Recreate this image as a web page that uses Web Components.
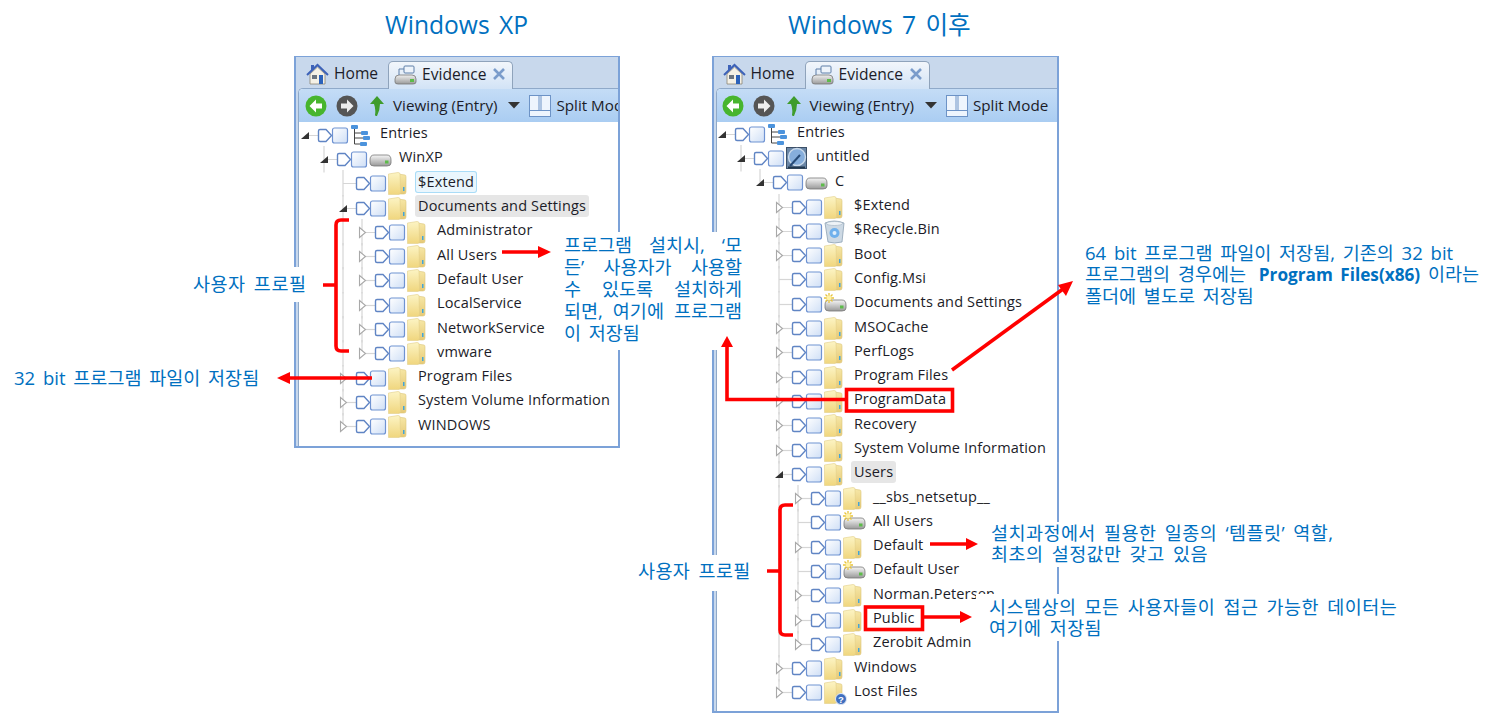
<!DOCTYPE html>
<html lang="ko">
<head>
<meta charset="utf-8">
<title>Windows 사용자 프로필</title>
<style>
  html, body { margin: 0; padding: 0; background: #fff; }
  b { font-weight: 700; font-size: 17.2px; margin-left: 5px; }
</style>
</head>
<body>
<diagram-slide>
  <note-text title-size style="left:385px;top:9px">Windows XP</note-text>
  <note-text title-size style="left:788px;top:9px">Windows 7 이후</note-text>

  <ev-window style="left:294px;top:56px;width:326px;height:392px" tree-top="1" shift="-1">
    <tree-row depth="0" exp="open" icon="tree">Entries</tree-row>
    <tree-row depth="1" exp="open" icon="drive" lines="1">WinXP</tree-row>
    <tree-row depth="2" icon="folder" lines="2" pill="blue">$Extend</tree-row>
    <tree-row depth="2" exp="open" icon="folder" lines="2" pill="gray">Documents and Settings</tree-row>
    <tree-row depth="3" exp="closed" icon="folder" lines="2 3">Administrator</tree-row>
    <tree-row depth="3" exp="closed" icon="folder" lines="2 3">All Users</tree-row>
    <tree-row depth="3" exp="closed" icon="folder" lines="2 3">Default User</tree-row>
    <tree-row depth="3" exp="closed" icon="folder" lines="2 3">LocalService</tree-row>
    <tree-row depth="3" exp="closed" icon="folder" lines="2 3">NetworkService</tree-row>
    <tree-row depth="3" exp="closed" icon="folder" lines="2 3e">vmware</tree-row>
    <tree-row depth="2" exp="closed" icon="folder" lines="2">Program Files</tree-row>
    <tree-row depth="2" exp="closed" icon="folder" lines="2">System Volume Information</tree-row>
    <tree-row depth="2" exp="closed" icon="folder" lines="2e">WINDOWS</tree-row>
  </ev-window>

  <ev-window style="left:712px;top:56px;width:347px;height:657px" tree-top="0" shift="-2" pad="-1.5">
    <tree-row depth="0" exp="open" icon="tree">Entries</tree-row>
    <tree-row depth="1" exp="open" icon="disc" lines="1">untitled</tree-row>
    <tree-row depth="2" exp="open" icon="drive" lines="2e">C</tree-row>
    <tree-row depth="3" exp="closed" icon="folder" lines="3">$Extend</tree-row>
    <tree-row depth="3" exp="closed" icon="bin" lines="3">$Recycle.Bin</tree-row>
    <tree-row depth="3" exp="closed" icon="folder" lines="3">Boot</tree-row>
    <tree-row depth="3" icon="folder" lines="3">Config.Msi</tree-row>
    <tree-row depth="3" icon="star" lines="3">Documents and Settings</tree-row>
    <tree-row depth="3" exp="closed" icon="folder" lines="3">MSOCache</tree-row>
    <tree-row depth="3" exp="closed" icon="folder" lines="3">PerfLogs</tree-row>
    <tree-row depth="3" exp="closed" icon="folder" lines="3">Program Files</tree-row>
    <tree-row depth="3" exp="closed" icon="folder" lines="3">ProgramData</tree-row>
    <tree-row depth="3" exp="closed" icon="folder" lines="3">Recovery</tree-row>
    <tree-row depth="3" exp="closed" icon="folder" lines="3">System Volume Information</tree-row>
    <tree-row depth="3" exp="open" icon="folder" lines="3" pill="gray">Users</tree-row>
    <tree-row depth="4" exp="closed" icon="folder" lines="3 4">__sbs_netsetup__</tree-row>
    <tree-row depth="4" icon="star" lines="3 4">All Users</tree-row>
    <tree-row depth="4" exp="closed" icon="folder" lines="3 4">Default</tree-row>
    <tree-row depth="4" icon="star" lines="3 4">Default User</tree-row>
    <tree-row depth="4" exp="closed" icon="folder" lines="3 4">Norman.Petersen</tree-row>
    <tree-row depth="4" exp="closed" icon="folder" lines="3 4">Public</tree-row>
    <tree-row depth="4" exp="closed" icon="folder" lines="3 4e">Zerobit Admin</tree-row>
    <tree-row depth="3" exp="closed" icon="folder" lines="3">Windows</tree-row>
    <tree-row depth="3" exp="closed" icon="lost" lines="3e">Lost Files</tree-row>
  </ev-window>

  <note-text patch style="left:186px;top:267px;width:119px;padding:5px 7px 6px 7px;letter-spacing:.5px">사용자 프로필</note-text>
  <note-text style="left:14px;top:366px">32 bit 프로그램 파일이 저장됨</note-text>
  <note-text patch style="left:556px;top:232px;width:178px;padding:2px 10px 6px 8px;line-height:22px">
    <span class="j">프로그램 설치시, ‘모</span>
    <span class="j">든’ 사용자가 사용할</span>
    <span class="j">수 있도록 설치하게</span>
    <span class="j">되면, 여기에 프로그램</span>
    <span>이 저장됨</span>
  </note-text>
  <note-text style="left:1085px;top:242px;line-height:21px">
    64 bit 프로그램 파일이 저장됨, 기존의 32 bit<br>
    프로그램의 경우에는 <b>Program Files(x86)</b> 이라는<br>
    폴더에 별도로 저장됨
  </note-text>
  <note-text patch style="left:631px;top:555px;width:122px;padding:4px 0 8px 7px;letter-spacing:.4px">사용자 프로필</note-text>
  <note-text patch style="left:984px;top:522px;width:420px;padding:1px 0 3px 7px;line-height:20.5px;letter-spacing:.45px">
    설치과정에서 필용한 일종의 ‘템플릿’ 역할,<br>최초의 설정값만 갖고 있음
  </note-text>
  <note-text patch style="left:976px;top:594px;width:430px;padding:2px 0 3px 13px;line-height:21px;letter-spacing:.45px">
    시스템상의 모든 사용자들이 접근 가능한 데이터는<br>여기에 저장됨
  </note-text>

  <red-marks></red-marks>
</diagram-slide>

<script>
const FONT = "'Open Sans', 'Noto Sans CJK KR', sans-serif";

// icons are drawn in a 22x22 box
const folder = `
  <path d="M10 2 L17 3 Q18 3 18 5 L18 20 Q18 22 16 22 L10 22Z" fill="url(#fb)" stroke="#dcc67a" stroke-width=".6"/>
  <path d="M.5 2 L10 .5 Q12 .5 12 2 L12.5 20 Q12.5 22.5 10 22.5 L.5 22.5Z" fill="url(#ff)" stroke="#e2cf88" stroke-width=".6"/>
  <rect x="15" y="15" width="1.5" height="4" fill="#42a5d8"/>`;
const drive = `
  <path d="M1 12 Q1 7 5 7 L18 7 Q22 7 22 12 L22 15 Q22 18 18 18 L5 18 Q1 18 1 15Z" fill="url(#dr)" stroke="#777" stroke-width=".8"/>
  <rect x="16" y="12.5" width="3.5" height="3" fill="#5dbb4a"/>`;
const ICONS = {
  folder,
  drive,
  star: drive + `
    <g stroke="#e8c43a" stroke-width="1.3">
      <path d="M5 0 V10 M0 5 H10 M1.5 1.5 L8.5 8.5 M8.5 1.5 L1.5 8.5"/>
    </g>
    <circle cx="5" cy="5" r="2.4" fill="#fff2a8"/>`,
  lost: folder + `
    <circle cx="17" cy="18" r="5.5" fill="#3f6fc0" stroke="#dfe8f6" stroke-width="1"/>
    <text x="17" y="21.5" font-size="9.5" font-weight="700" text-anchor="middle" fill="#fff" font-family="Liberation Sans">?</text>`,
  tree: `
    <g fill="#4c93dc">
      <rect x="1" y="1" width="7" height="4" rx="1"/>
      <rect x="11" y="7" width="7" height="4" rx="1"/>
      <rect x="13" y="12" width="7" height="4" rx="1"/>
      <rect x="10" y="18" width="7" height="4" rx="1"/>
    </g>
    <path d="M4.5 5 V20 H10 M4.5 9 H11 M4.5 14 H13" fill="none" stroke="#444" stroke-width="1"/>`,
  disc: `
    <rect x=".5" y=".5" width="20" height="21" fill="#6a86a6" stroke="#3c5068"/>
    <circle cx="11" cy="10" r="8.5" fill="#86aedc" stroke="#c9d9ea" stroke-width="1.4"/>
    <path d="M4 19 L14 8" stroke="#264a76" stroke-width="2"/>
    <path d="M2 20.5 H19" stroke="#22384f" stroke-width="2"/>`,
  bin: `
    <path d="M1 3 Q10 -1 20 3 L18 22 Q10 24 4 22Z" fill="#cdd9e4" stroke="#8ea2b4" stroke-width=".8"/>
    <ellipse cx="10.5" cy="3.5" rx="8" ry="2" fill="#eef3f7" stroke="#9fb0c0" stroke-width=".6"/>
    <circle cx="10.5" cy="13" r="5" fill="#6fb0ec"/>
    <circle cx="10.5" cy="13" r="2" fill="#dfeefc"/>`
};

class DiagramSlide extends HTMLElement {
  constructor () {
    super();
    this.attachShadow({ mode: 'open' });
    this.shadowRoot.innerHTML = `
      <style>
        :host { display: block; position: relative; width: 1499px; height: 724px; overflow: hidden; background: #fff; }
      </style>
      <slot></slot>`;
  }
}

class EvWindow extends HTMLElement {
  constructor () {
    super();
    const top = this.getAttribute('tree-top') || '0';
    const shift = this.getAttribute('shift') || '0';
    const pad = Number(this.getAttribute('pad') || 0);
    this.attachShadow({ mode: 'open' });
    this.shadowRoot.innerHTML = `
      <style>
        :host {
          position: absolute; display: flex; flex-direction: column; box-sizing: border-box;
          background: #c8d8ec; border: 1px solid #7ca2d8; border-width: 1px 2px 2px 2px;
          overflow: hidden; font: 14.5px ${FONT}; color: #1c1c28;
        }
        .tabs { display: flex; align-items: flex-end; height: 31px; flex: none; padding-left: ${10 + pad}px; }
        .tab { display: flex; align-items: center; height: 27px; gap: 5px; font-size: 15.6px; }
        .tab span { margin-top: -3px; }
        .home { width: 82px; }
        .evidence {
          width: 125px; height: 28px; box-sizing: border-box; padding: 0 6px 0 5px; margin-bottom: -1px; position: relative;
          border: 1px solid #8fa3bb; border-bottom: 0; border-radius: 5px 5px 0 0;
          background: linear-gradient(#f2f6fb, #d2e3f6);
        }
        .evidence span { flex: 1; margin-top: -4px; }
        .panel { flex: 1; min-height: 0; display: flex; flex-direction: column; margin-left: 2px; border: 1px solid #8fa9c9; border-width: 1px 0 0 1px; border-radius: 5px 0 0 0; overflow: hidden; background: #fff; }
        .bar {
          display: flex; align-items: center; height: 33px; flex: none; white-space: nowrap; padding-left: ${6 + pad}px;
          font-size: 15.2px; background: linear-gradient(#c4dcf6, #aacdf2);
        }
        .bar span { margin-top: -1px; }
        .tree { flex: 1; padding-top: ${top}px; margin-left: ${shift}px; }
        svg { display: block; flex: none; }
      </style>
      <div class="tabs">
        <div class="tab home">
          <svg width="23" height="23" viewBox="0 0 23 23">
            <path d="M4 11 V21 H19 V11 L11.5 4Z" fill="#f5f1e6" stroke="#8b8574" stroke-width=".8"/>
            <path d="M1 12 L11.5 2 L22 12" fill="none" stroke="#3d62b8" stroke-width="2"/>
            <rect x="5" y="2" width="3" height="5" fill="#3d62b8"/>
            <rect x="13" y="12" width="4" height="9" fill="#2c62ba"/>
            <rect x="6" y="12" width="5" height="4" fill="#6b7480"/>
          </svg>
          <span>Home</span>
        </div>
        <div class="tab evidence">
          <svg width="23" height="22" viewBox="0 0 23 22" style="margin-top:-2px">
            <path d="M1 15 Q1 11 5 11 L18 11 Q22 11 22 15 L22 18 Q22 20 19 20 L4 20 Q1 20 1 18Z" fill="url(#ed)" stroke="#777" stroke-width=".8"/>
            <rect x="16" y="15" width="4" height="3" fill="#5dbb4a"/>
            <rect x="10" y="2" width="10" height="7" rx="1" fill="#eef4fb" stroke="#5f7fa8"/>
            <path d="M10 5 H5 V11" fill="none" stroke="#5f7fa8"/>
            <defs><linearGradient id="ed" x1="0" x2="0" y1="0" y2="1"><stop offset="0" stop-color="#f0f0f0"/><stop offset="1" stop-color="#9a9a9a"/></linearGradient></defs>
          </svg>
          <span>Evidence</span>
          <svg width="14" height="14" viewBox="0 0 14 14" style="margin-top:-4px"><path d="M2 2 L12 12 M12 2 L2 12" stroke="#7a9ccb" stroke-width="2.6"/></svg>
        </div>
      </div>
      <div class="panel">
        <div class="bar">
          <svg width="22" height="22" viewBox="0 0 22 22">
            <circle cx="11" cy="11" r="10.5" fill="#47b52e"/>
            <path d="M11 4.5 L4.5 11 L11 17.5 V13.5 H17 V8.5 H11Z" fill="#fff"/>
          </svg>
          <svg width="22" height="22" viewBox="0 0 22 22" style="margin-left:9px">
            <circle cx="11" cy="11" r="10.5" fill="#555"/>
            <path d="M11 4.5 L17.5 11 L11 17.5 V13.5 H5 V8.5 H11Z" fill="#eee"/>
          </svg>
          <svg width="16" height="20" viewBox="0 0 16 20" style="margin-left:11px">
            <path d="M8 0 L15 8 H11 Q11 14 8 20 Q7 21 6 19 Q7 13 5 8 H1Z" fill="#3f9c2c"/>
          </svg>
          <span style="margin-left:8px">Viewing (Entry)</span>
          <svg width="12" height="7" viewBox="0 0 12 7" style="margin-left:11px"><path d="M0 0 H12 L6 6.5Z" fill="#333"/></svg>
          <svg width="22" height="22" viewBox="0 0 22 22" style="margin-left:9px">
            <rect x=".5" y=".5" width="21" height="21" fill="#eef5fd" stroke="#6d93c6"/>
            <path d="M.5 15.5 H21.5 M10 .5 V15.5 M12 .5 V15.5" stroke="#6d93c6" fill="none"/>
          </svg>
          <span style="margin-left:5px">Split Mode</span>
        </div>
        <div class="tree"><slot></slot></div>
      </div>`;
  }
}

class TreeRow extends HTMLElement {
  constructor () {
    super();
    const d = Number(this.getAttribute('depth') || 0);
    const exp = this.getAttribute('exp');
    const icon = this.getAttribute('icon');
    const lines = (this.getAttribute('lines') || '').split(' ').filter(Boolean);
    const pill = this.getAttribute('pill');
    const x = 19 * d;
    const guides = lines.map(l => {
      const end = l.endsWith('e');
      const gx = 7 + 19 * parseInt(l);
      return `<line x1="${gx}" x2="${gx}" y1="-1" y2="${end ? 12.5 : 25.5}" stroke="#d6d6d6" stroke-width="1.2"/>`;
    }).join('');
    let arrow = '';
    if (exp === 'open') arrow = `<path d="M${3 + x} 16 L${11 + x} 9 V16Z" fill="#333"/>`;
    if (exp === 'closed') arrow = `<path d="M${4.5 + x} 7.5 L${10.5 + x} 12.5 L${4.5 + x} 17.5Z" fill="#fff" stroke="#a9a9a9" stroke-width="1.1"/>`;
    this.attachShadow({ mode: 'open' });
    this.shadowRoot.innerHTML = `
      <style>
        :host { display: flex; align-items: center; height: 24.3px; white-space: nowrap; }
        svg { display: block; flex: none; overflow: visible; }
        .label { margin-top: -4px; height: 22px; line-height: 22px; padding: 0 3px; margin-left: -3px; border-radius: 3px; box-sizing: border-box; letter-spacing: .15px; }
        .gray { background: #e6e6e6; }
        .blue { background: #eaf6fd; box-shadow: inset 0 0 0 1px #a9dcf7; }
      </style>
      <svg width="${82 + x}" height="25" viewBox="0 0 ${82 + x} 25">
        <defs>
          <linearGradient id="cb" x1="0" x2="1" y1="0" y2="1"><stop offset="0" stop-color="#fff"/><stop offset="1" stop-color="#cfdff6"/></linearGradient>
          <linearGradient id="ff" x1="0" x2="0" y1="0" y2="1"><stop offset="0" stop-color="#fcf4c4"/><stop offset="1" stop-color="#f0d67e"/></linearGradient>
          <linearGradient id="fb" x1="0" x2="0" y1="0" y2="1"><stop offset="0" stop-color="#f6e7a6"/><stop offset="1" stop-color="#e6c976"/></linearGradient>
          <linearGradient id="dr" x1="0" x2="0" y1="0" y2="1"><stop offset="0" stop-color="#f6f6f6"/><stop offset="1" stop-color="#999"/></linearGradient>
        </defs>
        ${guides}
        <line x1="${7 + x}" x2="${20 + x}" y1="12.5" y2="12.5" stroke="#d6d6d6" stroke-width="1.2"/>
        ${arrow}
        <path d="M${20.5 + x} 8 Q${20.5 + x} 6.5 ${22 + x} 6.5 L${28 + x} 6.5 L${33.5 + x} 12.5 L${28 + x} 18.5 L${22 + x} 18.5 Q${20.5 + x} 18.5 ${20.5 + x} 17Z" fill="#fff" stroke="#6085c4" stroke-width="1.4"/>
        <rect x="${34.5 + x}" y="5" width="15" height="15" rx="2" fill="url(#cb)" stroke="#6f93d2" stroke-width="1.2"/>
        <g transform="translate(${52 + x} 1)">${ICONS[icon] || ''}</g>
      </svg>
      <span class="label ${pill || ''}"><slot></slot></span>`;
  }
}

class NoteText extends HTMLElement {
  constructor () {
    super();
    const size = this.hasAttribute('title-size') ? 24.6 : 18.5;
    this.attachShadow({ mode: 'open' });
    this.shadowRoot.innerHTML = `
      <style>
        :host {
          position: absolute; display: block; box-sizing: content-box; white-space: nowrap;
          font: ${size}px/1.3 ${FONT}; color: #0070c0; word-spacing: 3px;
          ${this.hasAttribute('patch') ? 'background:#fff;' : ''}
        }
        ::slotted(.j) { display: block; text-align: justify; text-align-last: justify; }
      </style>
      <slot></slot>`;
  }
}

class RedMarks extends HTMLElement {
  constructor () {
    super();
    this.attachShadow({ mode: 'open' });
    this.shadowRoot.innerHTML = `
      <style>
        :host { position: absolute; left: 0; top: 0; display: block; pointer-events: none; }
        svg { display: block; }
        .l { fill: none; stroke: #f00; stroke-width: 3.6; }
        .h { fill: #f00; }
      </style>
      <svg width="1499" height="724" viewBox="0 0 1499 724">
        <!-- XP -->
        <path class="l" d="M349 220 H341 Q336 220 336 225 V346 Q336 351 341 351 H349 M323 285 H336"/>
        <path class="l" d="M502 252 H540"/><path class="h" d="M538 246 L551 252 L538 258Z"/>
        <path class="l" d="M372 378 H288"/><path class="h" d="M290 372 L277 378 L290 384Z"/>
        <!-- 7 -->
        <path class="l" d="M952 370 L1063 289"/><path class="h" d="M1073 281 L1066 296 L1058 285Z"/>
        <rect class="l" x="846.5" y="389.5" width="106" height="21.5"/>
        <path class="l" d="M846 399.5 H727 V345"/><path class="h" d="M721 347 L727 336 L733 347Z"/>
        <path class="l" d="M793 505 H785 Q780 505 780 510 V630 Q780 635 785 635 H793 M767 571 H780"/>
        <path class="l" d="M930 544 H968"/><path class="h" d="M966 538 L978 544 L966 550Z"/>
        <rect class="l" x="865.5" y="607" width="57" height="22.5"/>
        <path class="l" d="M923 617 H962"/><path class="h" d="M960 611 L972 617 L960 623Z"/>
      </svg>`;
  }
}

customElements.define('diagram-slide', DiagramSlide);
customElements.define('ev-window', EvWindow);
customElements.define('tree-row', TreeRow);
customElements.define('note-text', NoteText);
customElements.define('red-marks', RedMarks);
</script>
</body>
</html>
